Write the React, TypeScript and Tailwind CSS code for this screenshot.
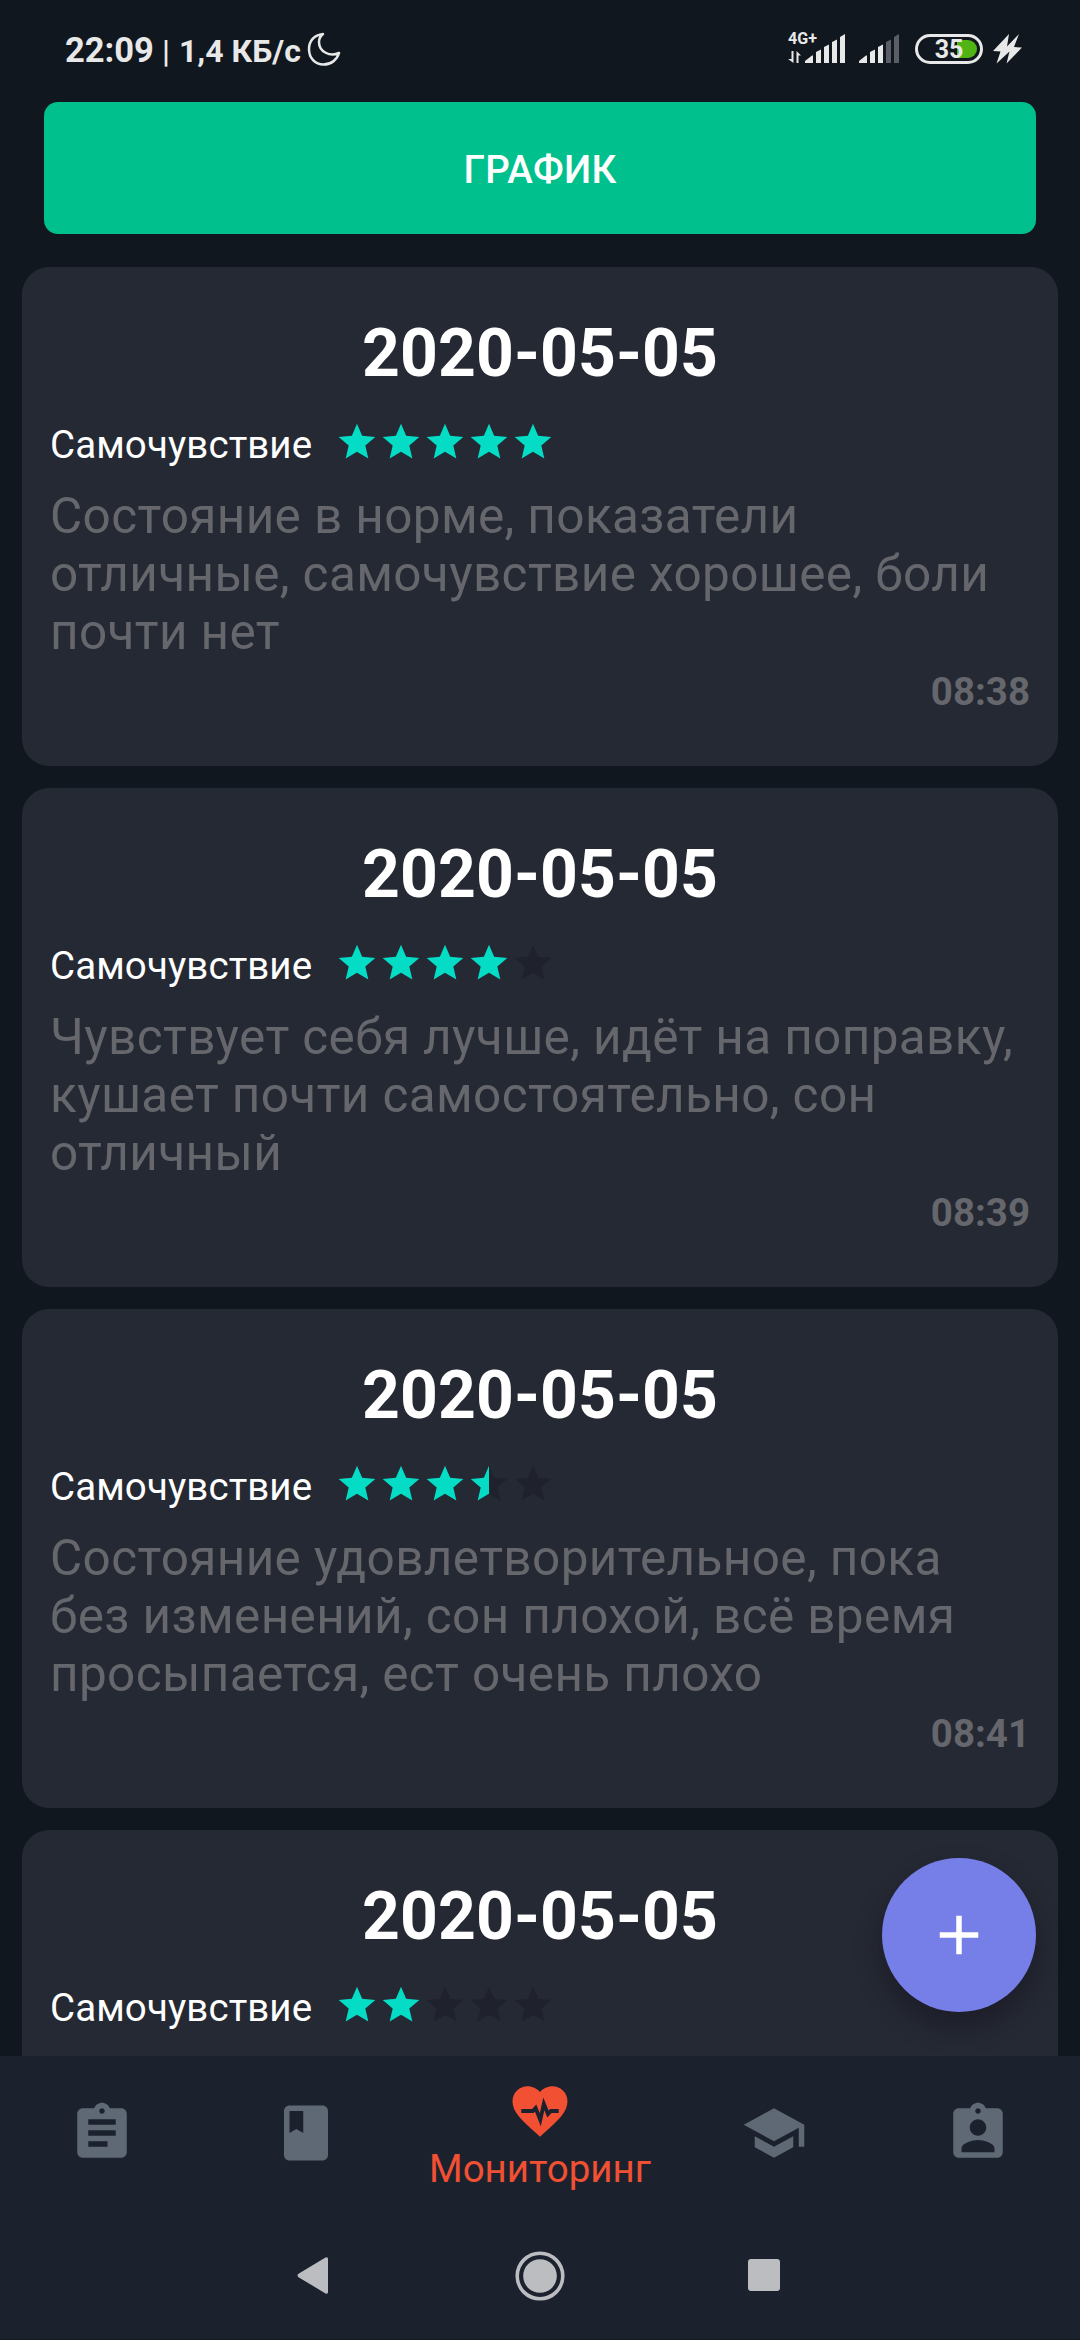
import type { ReactNode } from "react";

const STAR = "M12 17.27L18.18 21l-1.64-7.03L22 9.24l-7.19-.61L12 2 9.19 8.63 2 9.24l5.46 4.73L5.82 21z";

type Entry = { date: string; rating: number; lines: string[]; time: string };

const entries: Entry[] = [
  { date: "2020-05-05", rating: 5, lines: ["Состояние в норме, показатели", "отличные, самочувствие хорошее, боли", "почти нет"], time: "08:38" },
  { date: "2020-05-05", rating: 4, lines: ["Чувствует себя лучше, идёт на поправку,", "кушает почти самостоятельно, сон", "отличный"], time: "08:39" },
  { date: "2020-05-05", rating: 3.5, lines: ["Состояние удовлетворительное, пока", "без изменений, сон плохой, всё время", "просыпается, ест очень плохо"], time: "08:41" },
  { date: "2020-05-05", rating: 2, lines: [], time: "" },
];

function Star({ fill }: { fill: number }) {
  return (
    <svg viewBox="0 0 24 24" className="size-11 shrink-0">
      {fill < 1 && <path d={STAR} fill="#1f212c" />}
      {fill === 1 && <path d={STAR} fill="#04dcc6" />}
      {fill === 0.5 && <path d="M12 2L9.19 8.63 2 9.24l5.46 4.73L5.82 21 12 17.27z" fill="#04dcc6" />}
    </svg>
  );
}

function Card({ date, rating, lines, time }: Entry) {
  return (
    <article className="h-[499px] shrink-0 rounded-[27px] bg-[#252933] px-7 pt-12">
      <h2 className="text-center text-[66px] leading-[77px] font-bold tracking-[0.1px] text-white">{date}</h2>
      <div className="mt-7 flex h-[45px] items-start">
        <span className="mt-[2px] w-[285px] text-[38.5px] leading-[45px] tracking-[0.1px] text-white">Самочувствие</span>
        <div className="flex">
          {[0, 1, 2, 3, 4].map((i) => (
            <Star key={i} fill={Math.max(0, Math.min(1, rating - i))} />
          ))}
        </div>
      </div>
      <p className="mt-[22px] text-[49.5px] leading-[58px] tracking-[0.37px] whitespace-nowrap text-[#65676c]">
        {lines.map((l) => (
          <span key={l} className="block">{l}</span>
        ))}
      </p>
      <div className="mt-2 text-right text-[38.5px] leading-[45px] font-bold text-[#65676c]">{time}</div>
    </article>
  );
}

function StatusBar() {
  return (
    <header className="flex h-[102px] shrink-0 items-start justify-between pr-[58px] pl-[65px] text-[#e8e8e8]">
      <div className="flex items-baseline pt-7 font-bold whitespace-nowrap">
        <span className="w-[97px] text-[34.5px] leading-[44px]">22:09</span>
        <span className="w-[17px] text-[32px] leading-[44px] font-medium">|</span>
        <span className="w-[128px] text-[32px] leading-[44px]">1,4 КБ/с</span>
        <svg viewBox="0 0 34 34" className="mt-1 size-[34px] self-start">
          <path d="M16 2C7 3 2 9 2 17c0 9 6 15.500 14.500 15.500C24 32.500 30 28 32 21c-9 4-20-1-20-11 0-3 1.500-6 4-8z" fill="none" stroke="currentColor" strokeWidth="2.500" strokeLinejoin="round" />
        </svg>
      </div>
      <div className="flex">
        <svg viewBox="0 -32 58 64" className="h-16 w-[58px]" fill="currentColor">
          <text x="0" y="12" fontSize="16.500" fontWeight="700" fontFamily="Roboto, sans-serif" textLength="29" lengthAdjust="spacingAndGlyphs">4G+</text>
          <path d="M3.500 19h2v12L0 27h3.500zM8.500 31V19l4.500 4.500h-2.500V31z" />
          <path d="M17 29l7-5.500h1V31h-8zM28 20l5-2.500V31h-5zM36 15l5-2.500V31h-5zM44 10l5-2.500V31h-5zM52 5l5-3V31h-5z" />
        </svg>
        <svg viewBox="0 0 40 32" className="mt-8 ml-[13px] h-8 w-10" fill="currentColor">
          <path d="M0 29l7-5.500h1V31H0zM11 20l5-2.500V31h-5zM19 15l5-2.500V31h-5z" />
          <path d="M27 10l5-2.500V31h-5zM35 5l5-3V31h-5z" fill="#5b5e66" />
        </svg>
        <div className="relative mt-[34px] ml-4 flex h-[30px] w-[68px] items-center justify-center rounded-full border-3 border-[#e8e8e8]">
          <span className="absolute top-[3px] right-[3px] h-[18px] w-5 rounded-r-full bg-[#50b414]" />
          <span className="relative pt-0.5 text-[25px] leading-[24px] font-bold">35</span>
        </div>
        <svg viewBox="0 0 29 30" className="mt-[34px] ml-[10px] h-[30px] w-[29px]" fill="currentColor">
          <path d="M16 0L0 17l7.500.5L3.500 29.500 16.500 17.500 13.500 29.500 29 13.500 21 13 26 0 14 12.500z" />
        </svg>
      </div>
    </header>
  );
}

function Tab({ children }: { children: ReactNode }) {
  return (
    <div className="w-[204px] pt-11">
      <svg viewBox="0 0 24 24" className="mx-auto size-[66px]" fill="#5f6975">{children}</svg>
    </div>
  );
}

export default function App() {
  return (
    <div className="relative flex h-[2340px] w-[1080px] flex-col overflow-hidden bg-[#10171e] font-[Roboto,sans-serif]">
      <StatusBar />
      <main className="flex min-h-0 flex-1 flex-col overflow-hidden">
        <button className="mx-11 h-[132px] shrink-0 rounded-[14px] bg-[#00c08d] pt-[3px] text-[38.5px] font-medium tracking-[0.3px] text-white">ГРАФИК</button>
        <section className="mx-[22px] mt-[33px] flex min-h-0 flex-1 flex-col gap-[22px] overflow-hidden">
          {entries.map((e, i) => (
            <Card key={i} {...e} />
          ))}
        </section>
      </main>
      <button className="absolute top-[1858px] right-11 flex size-[154px] items-center justify-center rounded-full bg-[#767ee7] shadow-[0_14px_24px_rgba(20,18,30,0.5)]">
        <svg viewBox="0 0 24 24" className="size-[66px]">
          <path d="M19 13h-6v6h-2v-6H5v-2h6V5h2v6h6z" fill="#fff" />
        </svg>
      </button>
      <footer className="relative h-[284px] shrink-0 border-b border-[#161a22] bg-[#1b222d]">
        <nav className="flex h-[154px]">
          <Tab>
            <path d="M19 3h-4.180C14.400 1.840 13.300 1 12 1c-1.300 0-2.400.84-2.820 2H5c-1.100 0-2 .9-2 2v14c0 1.100.9 2 2 2h14c1.100 0 2-.9 2-2V5c0-1.100-.9-2-2-2zm-7 0c.55 0 1 .45 1 1s-.45 1-1 1-1-.45-1-1 .45-1 1-1zm2 14H7v-2h7v2zm3-4H7v-2h10v2zm0-4H7V7h10v2z" />
          </Tab>
          <Tab>
            <path fillRule="evenodd" d="M18 2H6c-1.100 0-2 .9-2 2v16c0 1.100.9 2 2 2h12c1.100 0 2-.9 2-2V4c0-1.100-.9-2-2-2zM6 4h5v8l-2.500-1.500L6 12V4z" />
          </Tab>
          <div className="flex w-[264px] flex-col items-center pt-[22px] text-[#f25033]">
            <svg viewBox="0 0 24 24" className="size-[66px] shrink-0">
              <path d="M12 21.350l-1.450-1.320C5.400 15.360 2 12.280 2 8.500 2 5.420 4.420 3 7.500 3c1.740 0 3.410.81 4.500 2.090C13.090 3.810 14.760 3 16.500 3 19.580 3 22 5.420 22 8.500c0 3.780-3.400 6.860-8.550 11.540L12 21.350z" fill="currentColor" />
              <path d="M5.200 12h4.200l1-1.100 1.700 4.300 1.300-5.800 1.500 3.700 1.100-1.100h2.800" fill="none" stroke="#1b222d" strokeWidth="1.400" strokeMiterlimit="10" />
            </svg>
            <span className="mt-[2px] text-[38.5px] leading-[45px]">Мониторинг</span>
          </div>
          <Tab>
            <path d="M5 13.180v4L12 21l7-3.820v-4L12 17l-7-3.820zM12 3L1 9l11 6 9-4.910V17h2V9L12 3z" />
          </Tab>
          <Tab>
            <path d="M19 3h-4.180C14.400 1.840 13.300 1 12 1c-1.300 0-2.400.84-2.820 2H5c-1.100 0-2 .9-2 2v14c0 1.100.9 2 2 2h14c1.100 0 2-.9 2-2V5c0-1.100-.9-2-2-2zm-7 0c.55 0 1 .45 1 1s-.45 1-1 1-1-.45-1-1 .45-1 1-1zm0 4c1.660 0 3 1.340 3 3s-1.340 3-3 3-3-1.340-3-3 1.340-3 3-3zm6 12H6v-1.400c0-2 4-3.100 6-3.100s6 1.100 6 3.100V19z" />
          </Tab>
        </nav>
        <div className="flex h-[129px] items-start pt-[41px] pl-[297px]">
          <svg viewBox="0 0 32 49" className="h-[49px] w-8" fill="#bcbdc1">
            <path d="M1.500 22.800L28.500 6.600q2.500-1 2.500 1.400v33q0 2.400-2.500 1.400L1.500 26.200q-2-1.700 0-3.400z" />
          </svg>
          <svg viewBox="0 0 50 50" className="ml-[186px] size-[50px]">
            <circle cx="25" cy="25" r="22.800" fill="none" stroke="#bcbdc1" strokeWidth="3.600" />
            <circle cx="25" cy="25" r="16.800" fill="#bcbdc1" />
          </svg>
          <span className="mt-2 ml-[183px] h-8 w-8 rounded-[3px] bg-[#bcbdc1]" />
        </div>
      </footer>
    </div>
  );
}
